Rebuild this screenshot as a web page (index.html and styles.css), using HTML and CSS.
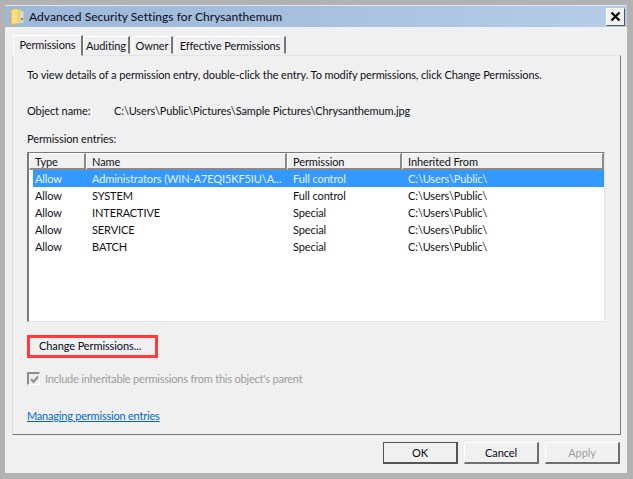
FILE: index.html
```html
<!DOCTYPE html>
<html lang="en">
<head>
<meta charset="utf-8">
<title>Advanced Security Settings for Chrysanthemum</title>
<link rel="stylesheet" href="styles.css">
</head>
<body>
<div class="window">
  <header class="titlebar">
    <svg class="folder" width="14" height="18" viewBox="0 0 14 18">
      <path d="M0.5 2 L7 0.5 L7 16 L0.5 17.5 Z" fill="#e8c25c" stroke="#d2ad48" stroke-width="0.6"/>
      <path d="M2 2 L7 1 L7 15 L2 16 Z" fill="#f7e08c"/>
      <path d="M7 1 L11 2 L11 15 L7 16 Z" fill="#f1d274"/>
      <path d="M11 3 L13.5 3 L13.5 15 L11 15 Z" fill="#d9dcc8"/>
      <path d="M11 10 L13 10 L13 12 L11 12 Z" fill="#5a90c8"/>
    </svg>
    <span class="title">Advanced Security Settings for Chrysanthemum</span>
    <button class="close" aria-label="Close">
      <svg width="11" height="11" viewBox="0 0 11 11"><path d="M1.5 1.5 L9.5 9.5 M9.5 1.5 L1.5 9.5" stroke="#000" stroke-width="2.2"/></svg>
    </button>
  </header>
  <div class="content">
    <nav class="tabs">
      <span class="tab tab-active">Permissions</span>
      <span class="tab tab-auditing">Auditing</span>
      <span class="tab tab-owner">Owner</span>
      <span class="tab tab-effective">Effective Permissions</span>
    </nav>
    <section class="panel">
      <p class="intro">To view details of a permission entry, double-click the entry. To modify permissions, click Change Permissions.</p>
      <div class="object"><span class="object-label">Object name:</span><span>C:\Users\Public\Pictures\Sample Pictures\Chrysanthemum.jpg</span></div>
      <p class="entries-label">Permission entries:</p>
      <div class="list">
        <div class="row head">
          <span class="cell">Type</span><span class="cell">Name</span><span class="cell">Permission</span><span class="cell">Inherited From</span>
        </div>
        <div class="row selected"><span class="cell">Allow</span><span class="cell">Administrators (WIN-A7EQI5KF5IU\A...</span><span class="cell">Full control</span><span class="cell">C:\Users\Public\</span></div>
        <div class="row"><span class="cell">Allow</span><span class="cell">SYSTEM</span><span class="cell">Full control</span><span class="cell">C:\Users\Public\</span></div>
        <div class="row"><span class="cell">Allow</span><span class="cell">INTERACTIVE</span><span class="cell">Special</span><span class="cell">C:\Users\Public\</span></div>
        <div class="row"><span class="cell">Allow</span><span class="cell">SERVICE</span><span class="cell">Special</span><span class="cell">C:\Users\Public\</span></div>
        <div class="row"><span class="cell">Allow</span><span class="cell">BATCH</span><span class="cell">Special</span><span class="cell">C:\Users\Public\</span></div>
      </div>
      <button class="change">Change Permissions...</button>
      <label class="inherit">
        <span class="check"><svg width="9" height="9" viewBox="0 0 9 9"><path d="M1 4 L3.5 7 L8 1.5" fill="none" stroke="#8f8f8f" stroke-width="2"/></svg></span>
        Include inheritable permissions from this object's parent
      </label>
      <a class="link" href="#">Managing permission entries</a>
    </section>
    <footer class="actions">
      <button class="btn btn-default">OK</button>
      <button class="btn">Cancel</button>
      <button class="btn btn-disabled">Apply</button>
    </footer>
  </div>
</div>
</body>
</html>
```
FILE: styles.css
```css
* { box-sizing: border-box; }
html, body { margin: 0; height: 100%; }
body {
  width: 633px;
  height: 479px;
  overflow: hidden;
  padding: 5px 6px 6px 5px;
  background: #b2b2b2;
  font: 11px/15px Lato, "Liberation Sans", sans-serif;
  letter-spacing: -0.1px;
  color: #101018;
}
.window {
  height: 468px;
  background: #f0f0f0;
  display: flex;
  flex-direction: column;
  border-top: 1px solid #dfe7f1;
}
.titlebar {
  height: 21px;
  flex: none;
  display: flex;
  align-items: center;
  padding: 0 2px 0 5px;
  background: linear-gradient(90deg, #9db8d9 0%, #a6c0de 50%, #b5cde8 100%);
}
.folder { flex: none; }
.title { margin-left: 5px; font-size: 12px; letter-spacing: 0.05px; flex: 1; color: #0a0a14; white-space: nowrap; }
.close {
  width: 19px;
  height: 18px;
  padding: 0;
  display: flex;
  align-items: center;
  justify-content: center;
  background: #f0f0f0;
  border: 1px solid;
  border-color: #fff #555 #555 #fff;
}
.content { flex: 1; padding: 8px 6px 9px 7px; display: flex; flex-direction: column; }
.tabs { display: flex; height: 20px; align-items: flex-end; position: relative; z-index: 1; padding-left: 1px; }
.tab {
  height: 18px;
  display: flex;
  align-items: center;
  justify-content: center;
  white-space: nowrap;
  border: 1px solid;
  border-color: #fff #777 transparent #fff;
  border-right-width: 2px;
  margin-bottom: 1px;
}
.tab-active { width: 70px; height: 21px; margin: 0 0 -1px 0; background: #f0f0f0; padding-bottom: 3px; }
.tab-auditing { width: 47px; margin-right: 2px; }
.tab-owner { width: 41px; margin-right: 2px; }
.tab-effective { width: 111px; }
.panel {
  height: 380px;
  flex: none;
  padding: 11px 14px 0;
  background: #f0f0f0;
  border: 1px solid;
  border-color: #fff #777 #777 #fff;
  border-top-color: #e4e4e4;
  border-left-color: #dcdcdc;
}
.intro { margin: 0; white-space: nowrap; }
.object { display: flex; margin-top: 21px; }
.object-label { width: 87px; }
.entries-label { margin: 13px 0 0; }
.list {
  margin-top: 6px;
  height: 170px;
  width: 578px;
  background: #fff;
  border: 1px solid;
  border-color: #7a7a7a #e6e6e6 #e6e6e6 #7a7a7a;
  border-left-width: 2px;
  padding-left: 4px;
}
.row {
  display: grid;
  grid-template-columns: 53px 201px 115px 1fr;
  height: 17px;
  line-height: 17px;
  align-items: center;
}
.cell { padding-left: 2px; white-space: nowrap; overflow: hidden; }
.cell:nth-child(2), .cell:nth-child(3), .cell:nth-child(4) { padding-left: 6px; }
.head {
  height: 17px;
  margin-left: -4px;
  grid-template-columns: 57px 201px 115px 1fr;
  background: #f0f0f0;
}
.head .cell {
  height: 17px;
  line-height: 15px;
  padding-left: 5px;
  border: 1px solid;
  border-color: #fff #8a8a8a #8a8a8a #fff;
  border-right-width: 2px;
  border-bottom-width: 2px;
}
.selected { background: #3399ff; color: #e6f2ff; }
.change {
  display: block;
  margin-top: 13px;
  width: 131px;
  height: 23px;
  padding: 0 0 2px 9px;
  text-align: left;
  white-space: nowrap;
  font: inherit;
  letter-spacing: inherit;
  color: #08081a;
  background: #f0f0f0;
  border: 3px solid #ff3b3b;
}
.inherit { display: flex; align-items: center; margin-top: 13px; color: #9c9c9c; letter-spacing: -0.2px; }
.check {
  width: 13px;
  height: 13px;
  margin-right: 5px;
  display: flex;
  align-items: center;
  justify-content: center;
  background: #efefef;
  border-style: solid;
  border-width: 2px 1px 1px 2px;
  border-color: #8c8c8c #fff #fff #8c8c8c;
}
.link { display: inline-block; margin-top: 22px; color: #0066cc; text-decoration: underline; letter-spacing: -0.21px; }
.actions { display: flex; justify-content: flex-end; gap: 6px; margin-top: 7px; padding-right: 1px; }
.btn {
  width: 75px;
  height: 22px;
  padding: 0;
  font: inherit;
  letter-spacing: inherit;
  color: #08081a;
  background: #f0f0f0;
  border: 1px solid;
  border-color: #fff #6f6f6f #6f6f6f #fff;
  border-right-width: 2px;
  border-bottom-width: 2px;
}
.btn-default { border-color: #555; border-width: 1px 2px 2px 1px; }
.btn-disabled { color: #a0a0a0; }
```
